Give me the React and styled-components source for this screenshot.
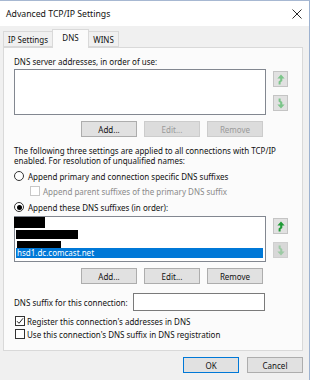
import React from 'react';
import styled, { createGlobalStyle, css } from 'styled-components';

const Global = createGlobalStyle`
  html, body { margin: 0; padding: 0; background: #f0f0f0; }
  body { font-family: "Noto Sans", "Open Sans", sans-serif; }
  * { box-sizing: border-box; }
`;

const Window = styled.div`
  width: 310px;
  height: 380px;
  background: #f0f0f0;
  border-top: 1px solid #a7b8d2;
  border-right: 1px solid #9db2d0;
  display: flex;
  flex-direction: column;
  overflow: hidden;
  font-size: 8px;
  color: #111;
`;

const TitleBar = styled.div`
  height: 25px;
  background: #fff;
  display: flex;
  align-items: center;
  justify-content: space-between;
  padding: 0 7px 0 6px;
  font-size: 8.7px;
`;

const CloseIcon = styled.svg`
  width: 10px;
  height: 10px;
`;

const Body = styled.div`
  padding: 3px 6px 0 3px;
  display: flex;
  flex-direction: column;
`;

const TabStrip = styled.div`
  display: flex;
  align-items: flex-end;
  height: 18px;
`;

const Tab = styled.div`
  width: ${p => p.$w}px;
  height: ${p => (p.$active ? 19 : 16)}px;
  border: 1px solid #d9d9d9;
  border-bottom: ${p => (p.$active ? 'none' : '1px solid #d9d9d9')};
  margin-left: ${p => (p.$first ? 0 : -1)}px;
  margin-bottom: ${p => (p.$active ? -1 : 0)}px;
  background: ${p => (p.$active ? '#fbfbfb' : '#f0f0f0')};
  position: relative;
  z-index: ${p => (p.$active ? 2 : 1)};
  display: flex;
  align-items: center;
  justify-content: center;
  padding-bottom: ${p => (p.$active ? 3 : 0)}px;
  white-space: nowrap;
`;

const Panel = styled.div`
  width: 300px;
  height: 304px;
  border: 1px solid #d9d9d9;
  background: #fbfbfb;
  padding-left: 10px;
  display: flex;
  flex-direction: column;
  position: relative;
  z-index: 1;
`;

const Label = styled.div`
  height: 10px;
  line-height: 10px;
  margin-top: ${p => p.$mt || 0}px;
  white-space: nowrap;
`;

const Para = styled.div`
  margin-top: 9px;
  line-height: 10px;
  width: 285px;
`;

const ListRow = styled.div`
  display: flex;
  gap: 7px;
  margin-top: ${p => p.$mt}px;
`;

const ListBox = styled.div`
  width: 252px;
  height: 46px;
  border: 1px solid #828790;
  background: #fff;
  display: flex;
  flex-direction: column;
`;

const ArrowCol = styled.div`
  display: flex;
  flex-direction: column;
  gap: 8px;
  padding-top: 2px;
`;

const ArrowBtn = styled.div`
  width: 15px;
  height: 16px;
  background: ${p => (p.$disabled ? '#d8d8d8' : '#e1e1e1')};
  border: 1px solid ${p => (p.$disabled ? '#cfcfcf' : '#c4c4c4')};
  display: flex;
  align-items: center;
  justify-content: center;
`;

const ButtonRow = styled.div`
  display: flex;
  gap: 7px;
  margin-top: ${p => p.$mt}px;
  padding-left: ${p => p.$pl || 0}px;
`;

const Button = styled.div`
  width: 56px;
  height: 16px;
  display: flex;
  align-items: center;
  justify-content: center;
  background: ${p => (p.$disabled ? '#dcdcdc' : '#e1e1e1')};
  border: 1px solid ${p => (p.$default ? '#0078d7' : p.$disabled ? '#cccccc' : '#adadad')};
  color: ${p => (p.$disabled ? '#9a9a9a' : '#111')};
`;

const OptionRow = styled.div`
  display: flex;
  align-items: center;
  height: 10px;
  margin-top: ${p => p.$mt}px;
  padding-left: ${p => p.$indent || 0}px;
  color: ${p => (p.$disabled ? '#8a8a8a' : '#111')};
  white-space: nowrap;
`;

const Radio = styled.span`
  width: 10px;
  height: 10px;
  border-radius: 50%;
  border: 1px solid #333;
  background: #fff;
  margin-right: 4px;
  display: flex;
  align-items: center;
  justify-content: center;
  flex: none;
  ${p => p.$checked && css`
    &::after {
      content: '';
      width: 5px;
      height: 5px;
      border-radius: 50%;
      background: #000;
    }
  `}
`;

const Check = styled.span`
  width: 10px;
  height: 10px;
  border: 1px solid ${p => (p.$disabled ? '#c8c8c8' : '#333')};
  background: #fff;
  margin-left: 1px;
  margin-right: ${p => p.$gap || 2}px;
  display: flex;
  align-items: center;
  justify-content: center;
  flex: none;
`;

const Redact = styled.div`
  width: ${p => p.$w}px;
  height: ${p => p.$h}px;
  margin-left: ${p => p.$ml}px;
  margin-top: ${p => p.$mt}px;
  background: #000;
  flex: none;
`;

const SelectedItem = styled.div`
  margin: 0 0 0 1px;
  width: 247px;
  height: 10px;
  line-height: 10px;
  background: #0078d7;
  color: #fff;
  padding-left: 1px;
`;

const SuffixRow = styled.div`
  display: flex;
  align-items: center;
  margin-top: 9px;
`;

const SuffixLabel = styled.div`
  width: 119px;
  white-space: nowrap;
`;

const TextInput = styled.div`
  width: 132px;
  height: 18px;
  border: 1px solid #7a7a7a;
  background: #fff;
`;

const Footer = styled.div`
  display: flex;
  justify-content: flex-end;
  gap: 8px;
  margin-top: 6px;
`;

const ArrowIcon = ({ down, color }) => (
  <svg width="9" height="11" viewBox="0 0 9 11" style={down ? { transform: 'scaleY(-1)' } : undefined}>
    <path d="M5 0.5 L8.6 4.6 L6.3 4.6 L6.3 7 L4.6 8.3 L4.6 10.6 L2.6 10.6 L2.6 7.6 L4.2 6.3 L4.2 4.6 L1.4 4.6 Z" fill={color} />
  </svg>
);

const CheckMark = () => (
  <svg width="8" height="8" viewBox="0 0 8 8">
    <path d="M1 4.2 L3 6.3 L7 1.3" fill="none" stroke="#222" strokeWidth="1" />
  </svg>
);

export default function App() {
  return (
    <>
      <Global />
      <Window>
        <TitleBar>
          <span>Advanced TCP/IP Settings</span>
          <CloseIcon viewBox="0 0 10 10">
            <path d="M0.5 0.5 L9.5 9.5 M9.5 0.5 L0.5 9.5" stroke="#111" strokeWidth="0.9" />
          </CloseIcon>
        </TitleBar>
        <Body>
          <TabStrip>
            <Tab $w={50} $first>IP Settings</Tab>
            <Tab $w={37} $active>DNS</Tab>
            <Tab $w={31}>WINS</Tab>
          </TabStrip>
          <Panel>
            <Label $mt={9}>DNS server addresses, in order of use:</Label>
            <ListRow $mt={2}>
              <ListBox />
              <ArrowCol>
                <ArrowBtn><ArrowIcon color="#7cc58a" /></ArrowBtn>
                <ArrowBtn><ArrowIcon down color="#7cc58a" /></ArrowBtn>
              </ArrowCol>
            </ListRow>
            <ButtonRow $mt={6} $pl={67}>
              <Button>Add...</Button>
              <Button $disabled>Edit...</Button>
              <Button $disabled>Remove</Button>
            </ButtonRow>
            <Para>
              The following three settings are applied to all connections with TCP/IP enabled. For resolution of unqualified names:
            </Para>
            <OptionRow $mt={5}>
              <Radio />
              Append primary and connection specific DNS suffixes
            </OptionRow>
            <OptionRow $mt={5} $indent={15} $disabled>
              <Check $disabled $gap={3} />
              Append parent suffixes of the primary DNS suffix
            </OptionRow>
            <OptionRow $mt={6}>
              <Radio $checked />
              Append these DNS suffixes (in order):
            </OptionRow>
            <ListRow $mt={4}>
              <ListBox>
                <Redact $w={31} $h={11} $ml={-1} $mt={0} />
                <Redact $w={62} $h={9} $ml={1} $mt={2} />
                <Redact $w={44} $h={7} $ml={2} $mt={2} />
                <SelectedItem>hsd1.dc.comcast.net</SelectedItem>
              </ListBox>
              <ArrowCol>
                <ArrowBtn><ArrowIcon color="#1f9a36" /></ArrowBtn>
                <ArrowBtn $disabled><ArrowIcon down color="#9ccaa4" /></ArrowBtn>
              </ArrowCol>
            </ListRow>
            <ButtonRow $mt={6} $pl={67}>
              <Button>Add...</Button>
              <Button>Edit...</Button>
              <Button>Remove</Button>
            </ButtonRow>
            <SuffixRow>
              <SuffixLabel>DNS suffix for this connection:</SuffixLabel>
              <TextInput />
            </SuffixRow>
            <OptionRow $mt={5}>
              <Check><CheckMark /></Check>
              Register this connection's addresses in DNS
            </OptionRow>
            <OptionRow $mt={3}>
              <Check />
              Use this connection's DNS suffix in DNS registration
            </OptionRow>
          </Panel>
          <Footer>
            <Button $default>OK</Button>
            <Button>Cancel</Button>
          </Footer>
        </Body>
      </Window>
    </>
  );
}
